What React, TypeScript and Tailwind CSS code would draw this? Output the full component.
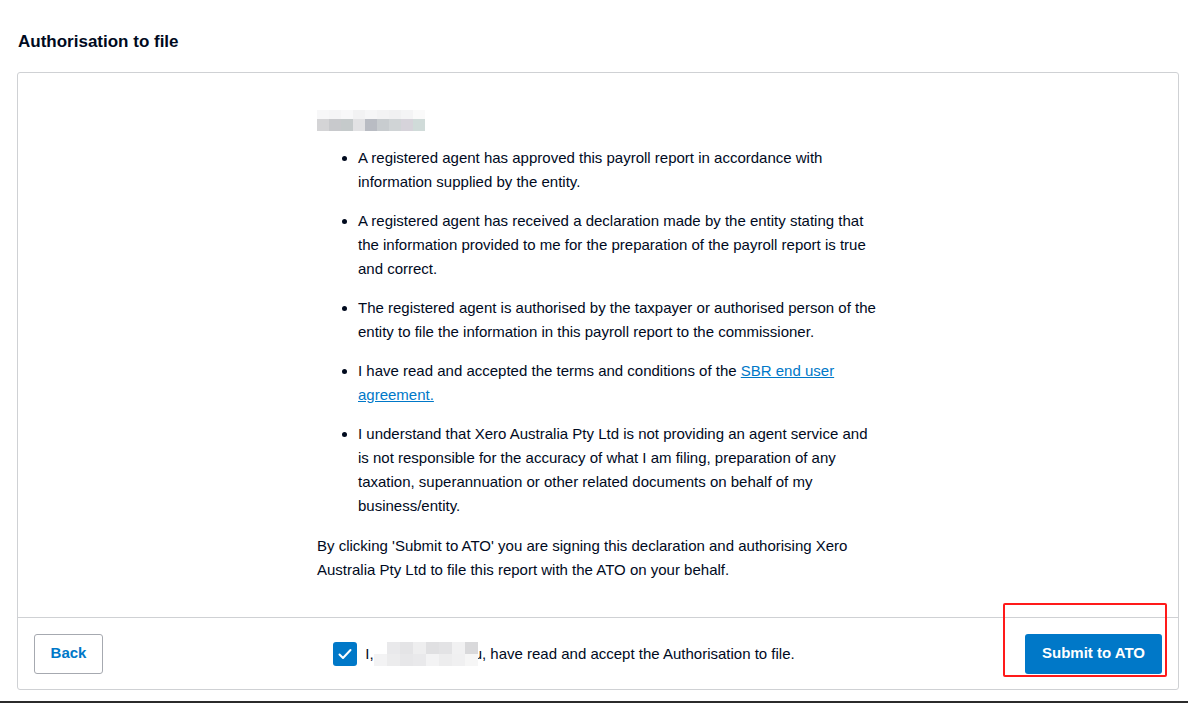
const FONT = { fontFamily: '"Liberation Sans", Arial, sans-serif' };

const TITLE_TOP = ["#f7f7f8", "#f5f5f6", "#f8f8f9", "#f2f2f3", "#f6f6f7", "#f3f3f4", "#f1f1f2", "#f4f4f5", "#fafafa"];
const TITLE_BOTTOM = ["#d4d4d6", "#c8c9cc", "#c5cacb", "#e2e2e4", "#b9bcc3", "#c8cccf", "#d0d4d6", "#d6d3da", "#d0dbd9"];

const NAME_TOP = ["#ffffff", "#e9e9eb", "#e4e4e6", "#eeeeef", "#e0e0e2", "#e3e3e5", "#f1f1f2", "#d9d9db"];
const NAME_BOTTOM = ["#f3f3f4", "#ececed", "#e7e7e9", "#e9e9eb", "#f3f3f4", "#ededee", "#f0f0f1", "#f6f6f6"];

function Mosaic({ top, bottom, cell, topH, bottomH }: { top: string[]; bottom: string[]; cell: number; topH: number; bottomH: number }) {
  return (
    <span className="inline-flex flex-col align-middle">
      <span className="flex">
        {top.map((c, i) => (
          <span key={i} style={{ background: c, width: cell, height: topH }} />
        ))}
      </span>
      <span className="flex">
        {bottom.map((c, i) => (
          <span key={i} style={{ background: c, width: cell, height: bottomH }} />
        ))}
      </span>
    </span>
  );
}

export default function App() {
  return (
    <div className="bg-white text-[#000a1e]" style={FONT}>
      <h2 className="ml-[18px] pt-[32px] text-[17px] font-bold leading-[20px]">Authorisation to file</h2>

      <div className="ml-[17px] mr-[9px] mt-[20px] rounded-[3px] border border-[#cfd1d4]">
        <div className="flex justify-center pt-[35px] pb-[35px]">
          <div className="w-[562px] text-[15px] leading-[24px]">
            <div className="flex h-[24px] items-center">
              <Mosaic top={TITLE_TOP} bottom={TITLE_BOTTOM} cell={12} topH={9} bottomH={12} />
            </div>
            <ul className="mt-[14px] list-disc pl-[41px]">
              <li>A registered agent has approved this payroll report in accordance with information supplied by the entity.</li>
              <li className="mt-[15px]">
                A registered agent has received a declaration made by the entity stating that the information provided to me for the preparation of the payroll report is true and correct.
              </li>
              <li className="mt-[15px]">
                The registered agent is authorised by the taxpayer or authorised person of the entity to file the information in this payroll report to the commissioner.
              </li>
              <li className="mt-[15px]">
                I have read and accepted the terms and conditions of the{" "}
                <a href="#" className="text-[#0078c8] underline">
                  SBR end user agreement.
                </a>
              </li>
              <li className="mt-[15px]">
                I understand that Xero Australia Pty Ltd is not providing an agent service and is not responsible for the accuracy of what I am filing, preparation of any taxation, superannuation or other related documents on behalf of my business/entity.
              </li>
            </ul>
            <p className="mt-[16px]">
              By clicking 'Submit to ATO' you are signing this declaration and authorising Xero Australia Pty Ltd to file this report with the ATO on your behalf.
            </p>
          </div>
        </div>

        <div className="relative flex h-[72px] items-center border-t border-[#cfd1d4] px-[16px]">
          <button
            type="button"
            className="h-[40px] w-[69px] rounded-[3px] border border-[#a6a9b0] bg-white text-[15px] font-bold text-[#0078c8]"
          >
            Back
          </button>
          <div className="flex flex-1 items-center justify-center">
            <span className="flex h-[24px] w-[24px] items-center justify-center rounded-[3px] bg-[#0078c8]">
              <svg width="16" height="16" viewBox="0 0 16 16" fill="none">
                <path d="M2.5 8.5l3.5 3.5 7.5-8" stroke="white" strokeWidth="2" strokeLinecap="round" strokeLinejoin="round" />
              </svg>
            </span>
            <span className="ml-[8px] flex items-center text-[15px] leading-[24px]">
              <span>I,</span>
              <span className="mr-[-4px] blur-[0.6px]">
                <Mosaic top={NAME_TOP} bottom={NAME_BOTTOM} cell={13} topH={12} bottomH={12} />
              </span>
              <span>u, have read and accept the Authorisation to file.</span>
            </span>
          </div>
          <button
            type="button"
            className="h-[40px] w-[137px] rounded-[3px] bg-[#0078c8] text-[15px] font-bold text-white"
          >
            Submit to ATO
          </button>

          <div className="pointer-events-none absolute left-[985px] top-[-15px] h-[74px] w-[164px] rounded-[2px] border-2 border-[#ff1a1a]" />
        </div>
      </div>

      <div className="mt-[11px] h-[2px] bg-[#2b2b2b]" />
    </div>
  );
}
